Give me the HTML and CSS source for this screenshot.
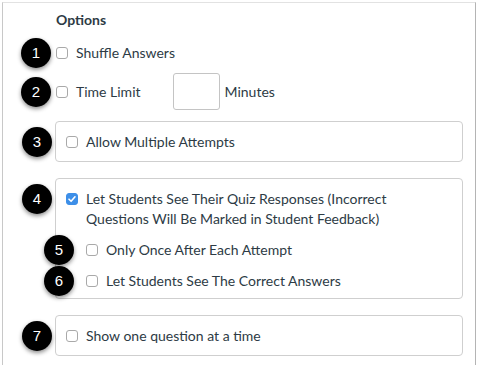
FILE: index.html
```html
<!DOCTYPE html>
<html lang="en">
<head>
    <meta charset="UTF-8">
    <title>Quiz Options</title>
    <link rel="stylesheet" href="styles.css">
</head>
<body>

    <div class="panel">
        <h3 class="title">Options</h3>

        <div class="row top-row">
            <span class="badge">1</span>
            <span class="check"></span>
            <span class="label">Shuffle Answers</span>
        </div>

        <div class="row top-row time-row">
            <span class="badge">2</span>
            <span class="check"></span>
            <span class="label">Time Limit</span>
            <span class="minutes-box"></span>
            <span class="label unit">Minutes</span>
        </div>

        <div class="card">
            <div class="row card-row">
                <span class="badge">3</span>
                <span class="check"></span>
                <span class="label">Allow Multiple Attempts</span>
            </div>
        </div>

        <div class="card card-tall">
            <div class="row card-row multi">
                <span class="badge badge-first">4</span>
                <span class="check checked">
                    <svg width="10" height="10" viewBox="0 0 10 10"><path d="M2 5.2 L4.1 7.3 L8 2.8" fill="none" stroke="#fff" stroke-width="1.6" stroke-linecap="round" stroke-linejoin="round"/></svg>
                </span>
                <span class="label wide">Let Students See Their Quiz Responses (Incorrect Questions Will Be Marked in Student Feedback)</span>
            </div>
            <div class="sub-list">
                <div class="row sub-row">
                    <span class="badge">5</span>
                    <span class="check"></span>
                    <span class="label">Only Once After Each Attempt</span>
                </div>
                <div class="row sub-row">
                    <span class="badge">6</span>
                    <span class="check"></span>
                    <span class="label">Let Students See The Correct Answers</span>
                </div>
            </div>
        </div>

        <div class="card">
            <div class="row card-row">
                <span class="badge">7</span>
                <span class="check"></span>
                <span class="label">Show one question at a time</span>
            </div>
        </div>
    </div>

</body>
</html>
```

FILE: styles.css
```css
body {
    margin: 0;
    padding: 0;
    background: #fff;
    font-family: Lato, "Open Sans", sans-serif;
    font-size: 14px;
    color: #2d3b45;
    overflow: hidden;
}
.panel {
    margin: 2px 0 0 2px;
    width: 474px;
    height: 363px;
    box-sizing: border-box;
    padding: 8px 12px 0 52px;
    border: 1px solid #c8c8c8;
    border-top-color: #e2e2e2;
    border-right-color: #b4b4b4;
    border-bottom: none;
    background: #fff;
}
.title {
    margin: 0;
    font-size: 14px;
    font-weight: bold;
    line-height: 18px;
    padding-left: 1px;
}
.row {
    position: relative;
    display: flex;
    align-items: center;
}
.top-row {
    height: 24px;
    margin-top: 12px;
    padding-left: 1px;
}
.time-row {
    height: 37px;
    margin-top: 8px;
}
.check {
    width: 12px;
    height: 12px;
    box-sizing: border-box;
    border: 1px solid #a9a9a9;
    border-radius: 3px;
    background: #fff;
    flex-shrink: 0;
    display: flex;
    align-items: center;
    justify-content: center;
}
.check.checked {
    background: #3d8fe8;
    border-color: #3d8fe8;
}
.label {
    margin-left: 8px;
    line-height: 20px;
}
.minutes-box {
    width: 47px;
    height: 37px;
    box-sizing: border-box;
    margin-left: 32px;
    border: 1px solid #c4c4c4;
    border-radius: 3px;
}
.unit {
    margin-left: 5px;
}
.card {
    margin-top: 11px;
    border: 1px solid #cfcfcf;
    border-radius: 4px;
    padding: 0 10px;
}
.card + .card {
    margin-top: 16px;
}
.card-row {
    height: 39px;
}
.card-tall {
    padding-top: 10px;
    padding-bottom: 2px;
}
.multi {
    height: auto;
    align-items: flex-start;
}
.multi .check {
    margin-top: 4px;
}
.wide {
    width: 350px;
}
.sub-list {
    padding: 5px 0 0 20px;
}
.sub-row {
    height: 31px;
}
.badge {
    position: absolute;
    left: -44px;
    top: 50%;
    width: 30px;
    height: 30px;
    margin-top: -15px;
    border-radius: 50%;
    background: #000;
    color: #fff;
    font-family: "Liberation Sans", Arial, sans-serif;
    font-size: 15px;
    line-height: 30px;
    text-align: center;
    box-shadow: 0 2px 4px rgba(0, 0, 0, 0.45);
}
.top-row .badge {
    left: -34px;
}
.badge-first {
    top: -5px;
    margin-top: 0;
}
.sub-row .badge {
    left: -42px;
}
```
